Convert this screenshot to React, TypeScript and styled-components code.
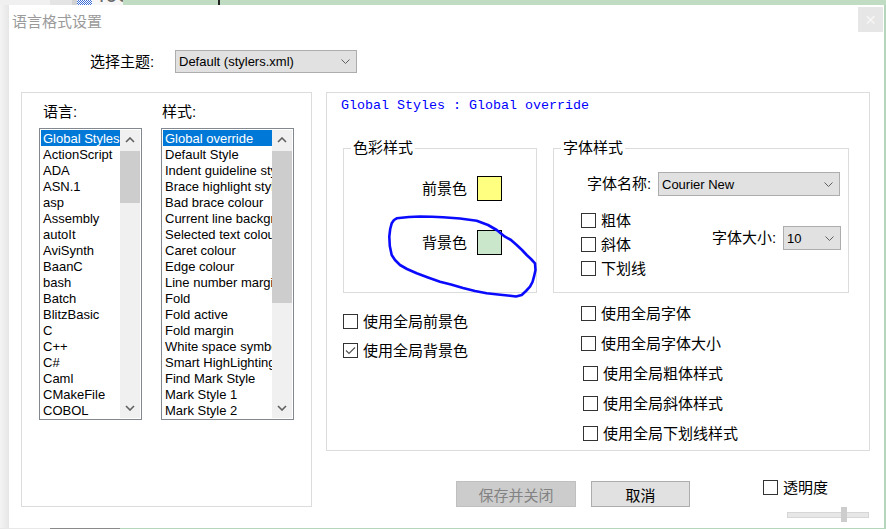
import React from "react";
import styled, { createGlobalStyle } from "styled-components";

const GlobalStyle = createGlobalStyle`
  html, body { margin: 0; padding: 0; width: 886px; height: 529px; overflow: hidden; }
  body { font-family: "Liberation Sans", "Noto Sans CJK SC", sans-serif; color: #000; }
  * { box-sizing: border-box; }
`;

const Desktop = styled.div`
  width: 886px;
  height: 529px;
  display: flex;
  flex-direction: column;
  background: #c0dcc3;
  overflow: hidden;
`;

const Strip = styled.div<{ $h: number }>`
  height: ${(p) => p.$h}px;
  flex: none;
  display: flex;
  overflow: hidden;
`;

const Seg = styled.div<{ $w?: number; $bg: string }>`
  flex: ${(p) => (p.$w ? `0 0 ${p.$w}px` : "1")};
  background: ${(p) => p.$bg};
  overflow: hidden;
  display: flex;
  align-items: flex-end;
`;

const Checker = styled(Seg)`
  background-image: repeating-conic-gradient(#3d6fd6 0 25%, #ffffff 0 50%);
  background-size: 2px 2px;
`;

const Digits = styled.span`
  font-family: "Liberation Sans", sans-serif;
  font-size: 22px;
  line-height: 22px;
  color: #6a6a6a;
  margin-bottom: -1px;
  margin-left: 1px;
`;

const Middle = styled.div`
  flex: 1;
  display: flex;
`;

const LeftEdge = styled.div`
  flex: 0 0 9px;
  background: linear-gradient(to right, #f4f4f4, #e6e6e6);
`;

const RightEdge = styled.div`
  flex: 1;
  background: #b6d6bb;
`;

const Dialog = styled.div`
  position: relative;
  flex: 0 0 875px;
  background: #ffffff;
  display: flex;
  flex-direction: column;
`;

const TitleBar = styled.div`
  height: 32px;
  flex: none;
  display: flex;
  justify-content: space-between;
  align-items: flex-start;
`;

const Title = styled.div`
  padding: 5px 0 0 3px;
  font-family: "Noto Sans CJK SC", sans-serif;
  font-size: 15px;
  line-height: 21px;
  color: #9a9a9a;
`;

const CloseButton = styled.div`
  width: 25px;
  height: 25px;
  margin: 2px 1px 0 0;
  background: #e6e6e6;
  color: #f7f7f7;
  font-family: "DejaVu Sans", sans-serif;
  font-size: 14px;
  display: flex;
  align-items: center;
  justify-content: center;
`;

const ThemeRow = styled.div`
  margin-top: 13px;
  height: 23px;
  padding-left: 81px;
  display: flex;
  align-items: center;
`;

const Label = styled.span<{ $w?: number }>`
  ${(p) => (p.$w ? `width: ${p.$w}px; flex: none;` : "")}
  font-size: 15px;
  line-height: 16px;
  white-space: nowrap;
`;

const Combo = styled.div<{ $w: number; $h: number }>`
  width: ${(p) => p.$w}px;
  height: ${(p) => p.$h}px;
  flex: none;
  background: #e1e1e1;
  border: 1px solid #adadad;
  display: flex;
  align-items: center;
  justify-content: space-between;
  padding: 0 6px 0 3px;
  font-family: "Liberation Sans", sans-serif;
  font-size: 13px;
`;

const Chevron = ({ up = false }: { up?: boolean }) => (
  <svg width="9" height="5" viewBox="0 0 9 5">
    <polyline
      points={up ? "0.5,4.5 4.5,0.5 8.5,4.5" : "0.5,0.5 4.5,4.5 8.5,0.5"}
      fill="none"
      stroke="#606060"
      strokeWidth="1"
    />
  </svg>
);

const BoldChevron = ({ up = false }: { up?: boolean }) => (
  <svg width="10" height="6" viewBox="0 0 10 6">
    <polyline
      points={up ? "1,5 5,1 9,5" : "1,1 5,5 9,1"}
      fill="none"
      stroke="#606060"
      strokeWidth="1.6"
    />
  </svg>
);

const MainRow = styled.div`
  margin-top: 19px;
  padding-left: 12px;
  display: flex;
  align-items: flex-start;
  gap: 14px;
`;

const LeftGroup = styled.div`
  width: 291px;
  height: 415px;
  border: 1px solid #dcdcdc;
  padding: 11px 0 0 17px;
  display: flex;
  gap: 19px;
`;

const ListColumn = styled.div`
  display: flex;
  flex-direction: column;
`;

const ListLabel = styled.div<{ $indent: number }>`
  height: 16px;
  margin-bottom: 8px;
  padding-left: ${(p) => p.$indent}px;
  font-size: 15px;
  line-height: 16px;
`;

const ListBox = styled.div<{ $w: number }>`
  width: ${(p) => p.$w}px;
  height: 292px;
  border: 1px solid #828790;
  padding: 1px;
  display: flex;
  background: #fff;
`;

const Items = styled.div`
  flex: 1;
  min-width: 0;
  display: flex;
  flex-direction: column;
  overflow: hidden;
`;

const Item = styled.div<{ $selected?: boolean }>`
  height: 16px;
  line-height: 17px;
  padding-left: 2px;
  font-family: "Liberation Sans", sans-serif;
  font-size: 13px;
  white-space: nowrap;
  overflow: hidden;
  background: ${(p) => (p.$selected ? "#0078d7" : "transparent")};
  color: ${(p) => (p.$selected ? "#ffffff" : "#000000")};
`;

const ScrollBar = styled.div`
  flex: 0 0 20px;
  background: #f0f0f0;
  display: flex;
  flex-direction: column;
`;

const ScrollButton = styled.div`
  height: 20px;
  flex: none;
  display: flex;
  align-items: center;
  justify-content: center;
`;

const Thumb = styled.div<{ $h: number }>`
  margin-top: 1px;
  height: ${(p) => p.$h}px;
  flex: none;
  background: #cdcdcd;
`;

const ScrollGap = styled.div`
  flex: 1;
`;

const RightColumn = styled.div`
  width: 544px;
  display: flex;
  flex-direction: column;
`;

const Panel = styled.div`
  height: 359px;
  border: 1px solid #dcdcdc;
  padding: 5px 0 0 16px;
  display: flex;
  flex-direction: column;
`;

const PanelHeader = styled.div`
  margin-left: -2px;
  height: 16px;
  font-family: "Liberation Mono", monospace;
  font-size: 13.33px;
  line-height: 16px;
  color: #0000ff;
  white-space: pre;
`;

const GroupsRow = styled.div`
  margin-top: 26px;
  display: flex;
  gap: 16px;
`;

const Group = styled.fieldset<{ $w: number }>`
  width: ${(p) => p.$w}px;
  height: 153px;
  margin: 0;
  padding: 0;
  min-width: 0;
  border: 1px solid #dcdcdc;
`;

const Legend = styled.legend`
  margin-left: 7px;
  padding: 0 2px;
  font-size: 15px;
  line-height: 16px;
`;

const ColorBody = styled.div`
  padding: 20px 0 0 78px;
  display: flex;
  flex-direction: column;
  gap: 29px;
`;

const ColorRow = styled.div`
  height: 25px;
  display: flex;
  align-items: center;
  gap: 10px;
`;

const Swatch = styled.div<{ $color: string }>`
  width: 25px;
  height: 25px;
  border: 1px solid #000;
  background: ${(p) => p.$color};
`;

const FontBody = styled.div`
  padding: 16px 0 0 27px;
  display: flex;
  flex-direction: column;
`;

const FontNameRow = styled.div`
  padding-left: 6px;
  display: flex;
  align-items: center;
`;

const FontLowerRow = styled.div`
  margin-top: 17px;
  display: flex;
  align-items: flex-start;
`;

const CheckColumn = styled.div<{ $w?: number; $top: number; $gap: number }>`
  ${(p) => (p.$w ? `width: ${p.$w}px; flex: none;` : "")}
  margin-top: ${(p) => p.$top}px;
  display: flex;
  flex-direction: column;
  gap: ${(p) => p.$gap}px;
`;

const SizeBlock = styled.div`
  margin: 13px 0 0 31px;
  display: flex;
  align-items: center;
`;

const CheckRowBox = styled.div<{ $indent?: number }>`
  height: 15px;
  padding-left: ${(p) => p.$indent || 0}px;
  display: flex;
  align-items: center;
  gap: 5px;
`;

const Box = styled.div`
  width: 15px;
  height: 15px;
  flex: none;
  border: 1px solid #333333;
  background: #ffffff;
  display: flex;
  align-items: center;
  justify-content: center;
`;

const CheckText = styled.span`
  font-size: 15px;
  line-height: 16px;
  white-space: nowrap;
`;

const Check = ({
  label,
  checked = false,
  indent = 0,
}: {
  label: string;
  checked?: boolean;
  indent?: number;
}) => (
  <CheckRowBox $indent={indent}>
    <Box>
      {checked && (
        <svg width="11" height="9" viewBox="0 0 11 9">
          <polyline
            points="1,4.5 4,7.5 10,1.5"
            fill="none"
            stroke="#555"
            strokeWidth="1.2"
          />
        </svg>
      )}
    </Box>
    <CheckText>{label}</CheckText>
  </CheckRowBox>
);

const BottomChecks = styled.div`
  display: flex;
`;

const Footer = styled.div`
  margin-top: 30px;
  padding-left: 130px;
  display: flex;
  align-items: flex-start;
`;

const Button = styled.div<{ $w: number; $disabled?: boolean }>`
  width: ${(p) => p.$w}px;
  height: 26px;
  flex: none;
  margin-right: 15px;
  border: 1px solid ${(p) => (p.$disabled ? "#bfbfbf" : "#adadad")};
  background: ${(p) => (p.$disabled ? "#cccccc" : "#e1e1e1")};
  color: ${(p) => (p.$disabled ? "#838383" : "#000")};
  font-size: 15px;
  display: flex;
  align-items: center;
  justify-content: center;
`;

const TransBlock = styled.div`
  margin: -1px 0 0 58px;
  display: flex;
  flex-direction: column;
`;

const Slider = styled.div`
  position: relative;
  width: 82px;
  height: 15px;
  margin: 12px 0 0 24px;
  padding-top: 5px;
`;

const Track = styled.div`
  height: 6px;
  border: 1px solid #d6d6d6;
  background: #e7e7e7;
`;

const SliderThumb = styled.div`
  position: absolute;
  left: 54px;
  top: 0;
  width: 6px;
  height: 15px;
  background: #cdcdcd;
`;

const Scribble = styled.svg`
  position: absolute;
  left: 376px;
  top: 207px;
  pointer-events: none;
`;

const languages = [
  "Global Styles", "ActionScript", "ADA", "ASN.1", "asp", "Assembly", "autoIt",
  "AviSynth", "BaanC", "bash", "Batch", "BlitzBasic", "C", "C++", "C#", "Caml",
  "CMakeFile", "COBOL",
];

const styles = [
  "Global override", "Default Style", "Indent guideline style",
  "Brace highlight style", "Bad brace colour", "Current line background colour",
  "Selected text colour", "Caret colour", "Edge colour", "Line number margin",
  "Fold", "Fold active", "Fold margin", "White space symbol",
  "Smart HighLighting", "Find Mark Style", "Mark Style 1", "Mark Style 2",
];

const List = ({ items, width, thumb }: { items: string[]; width: number; thumb: number }) => (
  <ListBox $w={width}>
    <Items>
      {items.map((t, i) => (
        <Item key={t} $selected={i === 0}>
          {t}
        </Item>
      ))}
    </Items>
    <ScrollBar>
      <ScrollButton>
        <BoldChevron up />
      </ScrollButton>
      <Thumb $h={thumb} />
      <ScrollGap />
      <ScrollButton>
        <BoldChevron />
      </ScrollButton>
    </ScrollBar>
  </ListBox>
);

const scribblePath =
  "M11.7,6.3 L24,5 L35,4.5 L47,4.8 L58,5.3 L75,6.5 L91.7,8.7 L103,13 L111.7,18 L120,24.7 L126,28 L131.7,33 L137,38 L141.7,43 L146,47 L150,51.3 L150.5,58 L149,64.7 L147.5,70 L145,74.7 L141,79 L136.7,83 L131,84.5 L125,83.7 L113,82.5 L101.7,81.3 L90,79 L78,76 L66,72.5 L55,69.7 L43,65.5 L31.7,61.3 L22,57 L15,53 L10,48 L6.7,43 L4.8,34 L4.3,24.7 L5.2,17 L6.7,11.3 L9,8 Z";

export default function App() {
  return (
    <>
      <GlobalStyle />
      <Desktop>
        <Strip $h={5}>
          <Seg $w={50} $bg="#f0f0f0" />
          <Seg $w={22} $bg="#e4e4e4" />
          <Seg $w={5} $bg="#d2d2d2" />
          <Checker $w={15} $bg="#ffffff" />
          <Seg $w={31} $bg="#f6f6f6">
            <Digits>400</Digits>
          </Seg>
          <Seg $w={95} $bg="#c0dcc3" />
          <Seg $w={2} $bg="#222222" />
          <Seg $bg="#c0dcc3" />
        </Strip>
        <Middle>
          <LeftEdge />
          <Dialog>
            <TitleBar>
              <Title>语言格式设置</Title>
              <CloseButton>✕</CloseButton>
            </TitleBar>

            <ThemeRow>
              <Label $w={85}>选择主题:</Label>
              <Combo $w={182} $h={23}>
                <span>Default (stylers.xml)</span>
                <Chevron />
              </Combo>
            </ThemeRow>

            <MainRow>
              <LeftGroup>
                <ListColumn>
                  <ListLabel $indent={4}>语言:</ListLabel>
                  <List items={languages} width={103} thumb={52} />
                </ListColumn>
                <ListColumn>
                  <ListLabel $indent={1}>样式:</ListLabel>
                  <List items={styles} width={133} thumb={152} />
                </ListColumn>
              </LeftGroup>

              <RightColumn>
                <Panel>
                  <PanelHeader>Global Styles : Global override</PanelHeader>
                  <GroupsRow>
                    <Group $w={194}>
                      <Legend>色彩样式</Legend>
                      <ColorBody>
                        <ColorRow>
                          <Label>前景色</Label>
                          <Swatch $color="#ffff80" />
                        </ColorRow>
                        <ColorRow>
                          <Label>背景色</Label>
                          <Swatch $color="#cbe7cb" />
                        </ColorRow>
                      </ColorBody>
                    </Group>
                    <Group $w={296}>
                      <Legend>字体样式</Legend>
                      <FontBody>
                        <FontNameRow>
                          <Label $w={71}>字体名称:</Label>
                          <Combo $w={182} $h={24}>
                            <span>Courier New</span>
                            <Chevron />
                          </Combo>
                        </FontNameRow>
                        <FontLowerRow>
                          <CheckColumn $w={100} $top={0} $gap={9}>
                            <Check label="粗体" />
                            <Check label="斜体" />
                            <Check label="下划线" />
                          </CheckColumn>
                          <SizeBlock>
                            <Label $w={71}>字体大小:</Label>
                            <Combo $w={58} $h={24}>
                              <span>10</span>
                              <Chevron />
                            </Combo>
                          </SizeBlock>
                        </FontLowerRow>
                      </FontBody>
                    </Group>
                  </GroupsRow>
                  <BottomChecks>
                    <CheckColumn $w={238} $top={21} $gap={14}>
                      <Check label="使用全局前景色" />
                      <Check label="使用全局背景色" checked />
                    </CheckColumn>
                    <CheckColumn $top={13} $gap={15}>
                      <Check label="使用全局字体" />
                      <Check label="使用全局字体大小" />
                      <Check label="使用全局粗体样式" indent={2} />
                      <Check label="使用全局斜体样式" indent={2} />
                      <Check label="使用全局下划线样式" indent={2} />
                    </CheckColumn>
                  </BottomChecks>
                </Panel>

                <Footer>
                  <Button $w={120} $disabled>
                    保存并关闭
                  </Button>
                  <Button $w={99}>取消</Button>
                  <TransBlock>
                    <Check label="透明度" />
                    <Slider>
                      <Track />
                      <SliderThumb />
                    </Slider>
                  </TransBlock>
                </Footer>
              </RightColumn>
            </MainRow>

            <Scribble width="160" height="92" viewBox="0 0 160 92">
              <path
                d={scribblePath}
                fill="none"
                stroke="#0a0aff"
                strokeWidth="2.6"
                strokeLinejoin="round"
                strokeLinecap="round"
              />
            </Scribble>
          </Dialog>
          <RightEdge />
        </Middle>
        <Strip $h={1}>
          <Seg $w={50} $bg="#e8e8e8" />
          <Seg $w={70} $bg="#8a8a8a" />
          <Seg $bg="#b6d6bb" />
        </Strip>
      </Desktop>
    </>
  );
}
